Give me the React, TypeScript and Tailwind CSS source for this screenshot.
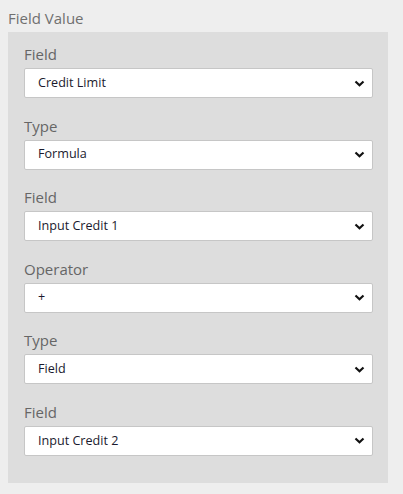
const fields = [
  { label: "Field", value: "Credit Limit" },
  { label: "Type", value: "Formula" },
  { label: "Field", value: "Input Credit 1" },
  { label: "Operator", value: "+" },
  { label: "Type", value: "Field" },
  { label: "Field", value: "Input Credit 2" },
];

function Chevron() {
  return (
    <svg width="11" height="7" viewBox="0 0 11 7" className="shrink-0">
      <path d="M1.5 1.5 L5.5 5.2 L9.5 1.5" fill="none" stroke="#111" strokeWidth="2.2" />
    </svg>
  );
}

export default function App() {
  return (
    <div className="w-[403px] h-[494px] bg-[#eeeeee] px-2 pt-[8px] font-['Segoe_UI','Open_Sans',sans-serif]">
      <div className="text-[15px] leading-[20px] text-[#707070] h-[24px]">Field Value</div>
      <div className="w-[380px] bg-[#dddddd] px-4 pt-[10px] pb-[27px] flex flex-col gap-[15.6px]">
        {fields.map((f, i) => (
          <div key={i}>
            <div className="text-[15px] leading-[20px] text-[#666666] h-[26px] pt-[2px]">{f.label}</div>
            <div className="h-[30px] w-[349px] bg-white border border-[#c6c6c6] rounded-[2px] flex items-center justify-between pl-[13px] pr-[7px]">
              <span className="text-[12.6px] text-[#1a1a2e]">{f.value}</span>
              <Chevron />
            </div>
          </div>
        ))}
      </div>
    </div>
  );
}
